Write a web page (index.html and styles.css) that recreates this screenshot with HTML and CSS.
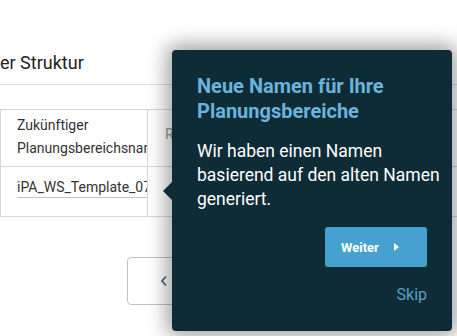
FILE: index.html
```html
<!DOCTYPE html>
<html lang="de">
<head>
<meta charset="utf-8">
<link rel="stylesheet" href="styles.css">
</head>
<body>
<div class="page">
  <h2 class="heading">er Struktur</h2>
  <div class="divider"></div>
  <div class="table">
    <div class="row head">
      <div class="cell c1">Zukünftiger Planungsbereichsname</div>
      <div class="cell c2">Referenz</div>
    </div>
    <div class="row body">
      <div class="cell c1"><div class="input">iPA_WS_Template_07</div></div>
      <div class="cell c2"></div>
    </div>
  </div>
  <div class="pager">
    <button class="pbtn"><svg width="8" height="12" viewBox="0 0 8 12"><path d="M6 1.5 L2 6 L6 10.5" fill="none" stroke="#5a6670" stroke-width="1.8"/></svg></button>
  </div>

  <div class="popover">
    <div class="arrow"></div>
    <h3 class="title">Neue Namen für Ihre Planungsbereiche</h3>
    <p class="text">Wir haben einen Namen<br>basierend auf den alten Namen<br>generiert.</p>
    <div class="actions">
      <button class="next">Weiter <svg width="6" height="8" viewBox="0 0 6 8"><path d="M0 0 L5 4 L0 8 Z" fill="#fff"/></svg></button>
    </div>
    <div class="skip">Skip</div>
  </div>
</div>
</body>
</html>
```

FILE: styles.css
```css
html, body {
  margin: 0;
  padding: 0;
  background: #fff;
  width: 457px;
  height: 336px;
  overflow: hidden;
  font-family: Roboto, "Liberation Sans", sans-serif;
}
.page {
  position: relative;
  width: 457px;
  height: 336px;
}
.heading {
  margin: 0;
  padding-top: 51px;
  font-size: 18px;
  line-height: 24px;
  font-weight: 400;
  color: #222;
}
.divider {
  margin-top: 9px;
  height: 1px;
  background: #dcdce2;
  width: 457px;
}
.table {
  margin-top: 24px;
  border: 1px solid #d5d5e6;
  border-right: none;
  width: 480px;
}
.row {
  display: flex;
}
.row.head {
  height: 56px;
  border-bottom: 1px solid #d5d5e6;
}
.row.body {
  height: 49px;
}
.cell {
  box-sizing: border-box;
  overflow: hidden;
  font-size: 14px;
  color: #333;
}
.c1 {
  width: 147px;
  border-right: 1px solid #d5d5e6;
  padding-left: 16px;
}
.head .c1 {
  padding-top: 4px;
  line-height: 23px;
}
.head .c2 {
  padding-left: 17px;
  padding-top: 16px;
  color: #999;
  white-space: nowrap;
}
.body .c1 {
  padding-top: 11px;
}
.input {
  white-space: nowrap;
  line-height: 19px;
  border-bottom: 1px solid #c4c4c4;
  width: 160px;
}
.pager {
  margin-top: 40px;
  padding-left: 127px;
}
.pbtn {
  width: 60px;
  height: 48px;
  border: 1px solid #bfc3c6;
  border-radius: 4px;
  background: #fff;
  padding: 0;
  display: flex;
  align-items: center;
  justify-content: flex-start;
  padding-left: 32px;
}
.popover {
  position: absolute;
  left: 172px;
  top: 50px;
  width: 280px;
  height: 281px;
  box-sizing: border-box;
  padding: 24px 25px 0 25px;
  background: #0e2c35;
  border-radius: 4px;
  box-shadow: 0 0 20px 5px rgba(0,0,0,0.38);
  color: #fff;
}
.arrow {
  position: absolute;
  left: -9px;
  top: 132px;
  width: 0;
  height: 0;
  border-top: 9px solid transparent;
  border-bottom: 9px solid transparent;
  border-right: 9px solid #0e2c35;
}
.title {
  margin: 0;
  font-size: 20px;
  line-height: 25px;
  font-weight: 700;
  color: #6ab3dd;
}
.text {
  margin: 15px 0 0 0;
  font-size: 17.5px;
  line-height: 24px;
  color: #fff;
  white-space: nowrap;
}
.actions {
  display: flex;
  justify-content: flex-end;
  margin-top: 16px;
}
.next {
  width: 102px;
  height: 40px;
  background: #46a1cf;
  border: none;
  border-radius: 3px;
  color: #fff;
  font-family: Roboto, "Liberation Sans", sans-serif;
  font-weight: 700;
  font-size: 13px;
  display: flex;
  align-items: center;
  padding-left: 16px;
  gap: 15px;
}
.skip {
  text-align: right;
  margin-top: 18px;
  font-size: 16px;
  line-height: 20px;
  color: #5a9fc6;
}
```
